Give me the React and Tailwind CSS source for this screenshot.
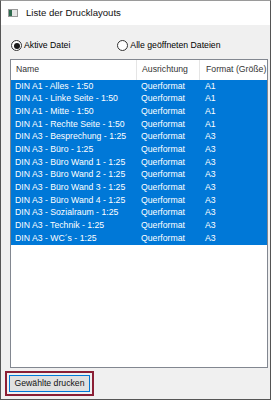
const rows = [
  ['DIN A1 - Alles - 1:50', 'Querformat', 'A1'],
  ['DIN A1 - Linke Seite - 1:50', 'Querformat', 'A1'],
  ['DIN A1 - Mitte - 1:50', 'Querformat', 'A1'],
  ['DIN A1 - Rechte Seite - 1:50', 'Querformat', 'A1'],
  ['DIN A3 - Besprechung - 1:25', 'Querformat', 'A3'],
  ['DIN A3 - Büro - 1:25', 'Querformat', 'A3'],
  ['DIN A3 - Büro Wand 1 - 1:25', 'Querformat', 'A3'],
  ['DIN A3 - Büro Wand 2 - 1:25', 'Querformat', 'A3'],
  ['DIN A3 - Büro Wand 3 - 1:25', 'Querformat', 'A3'],
  ['DIN A3 - Büro Wand 4 - 1:25', 'Querformat', 'A3'],
  ['DIN A3 - Sozialraum - 1:25', 'Querformat', 'A3'],
  ['DIN A3 - Technik - 1:25', 'Querformat', 'A3'],
  ['DIN A3 - WC´s - 1:25', 'Querformat', 'A3'],
]

function Radio({ checked, label }) {
  return (
    <div className="flex items-center gap-[2px]">
      <span className="w-[11px] h-[11px] rounded-full border border-[#333] bg-white flex items-center justify-center">
        {checked && <span className="w-[6px] h-[6px] rounded-full bg-[#1a1a1a]" />}
      </span>
      <span>{label}</span>
    </div>
  )
}

export default function App() {
  return (
    <div
      className="w-[271px] h-[400px] flex flex-col border-x border-b border-t border-x-[#555] border-b-[#555] border-t-[#9a9a9a] bg-[#f0f0f0] text-[8.7px] text-black overflow-hidden"
      style={{ fontFamily: '"Liberation Sans", Arial, sans-serif' }}
    >
      {/* Title bar */}
      <div className="h-[24px] bg-white flex items-center pl-[7px] gap-[8px] shrink-0">
        <svg width="10" height="8" viewBox="0 0 10 8">
          <rect x="0.5" y="0.5" width="9" height="7" fill="#e6e6e6" stroke="#9a9a9a" />
          <rect x="1" y="1" width="3" height="6" fill="#2f6b4f" />
        </svg>
        <span className="text-[9.6px] text-[#111]">Liste der Drucklayouts</span>
      </div>

      {/* Radio options */}
      <div className="flex items-center h-[11px] mt-[15px] pl-[10px] shrink-0">
        <Radio checked label="Aktive Datei" />
        <div className="ml-[47px]">
          <Radio label="Alle geöffneten Dateien" />
        </div>
      </div>

      {/* List */}
      <div className="ml-[9px] mr-[2px] mt-[8px] h-[309px] bg-white border border-[#828790] flex flex-col shrink-0">
        <div className="flex h-[20px] items-center text-[#333] shrink-0">
          <div className="w-[126px] pl-[5px] border-r border-[#e5e5e5] h-full flex items-center">Name</div>
          <div className="w-[63px] pl-[5px] border-r border-[#e5e5e5] h-full flex items-center">Ausrichtung</div>
          <div className="flex-1 pl-[6px]">Format (Größe)</div>
        </div>
        <div className="flex flex-col">
          {rows.map(([name, dir, fmt]) => (
            <div key={name} className="flex h-[12.67px] items-center bg-[#0078d7] text-white">
              <div className="w-[126px] pl-[4px]">{name}</div>
              <div className="w-[63px] pl-[4px]">{dir}</div>
              <div className="flex-1 pl-[5px]">{fmt}</div>
            </div>
          ))}
        </div>
      </div>

      {/* Button */}
      <div className="pl-[4px] mt-[3px]">
        <div className="inline-flex border-2 border-[#8b1f35] p-[2px]">
          <div className="w-[81px] h-[17px] bg-[#e1e1e1] border border-[#0078d7] flex items-center justify-center text-[#111]">
            Gewählte drucken
          </div>
        </div>
      </div>
    </div>
  )
}
